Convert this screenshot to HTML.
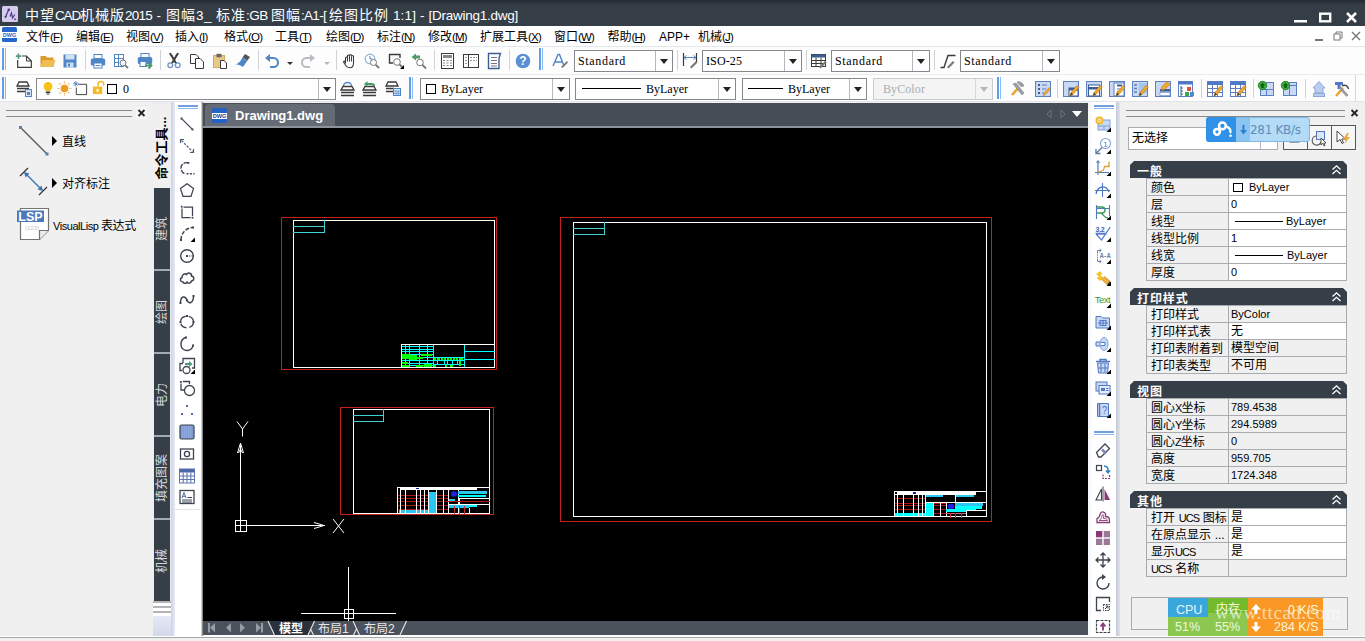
<!DOCTYPE html>
<html lang="zh-CN">
<head>
<meta charset="utf-8">
<title>中望CAD机械版2015</title>
<style>
*{box-sizing:border-box;margin:0;padding:0}
html,body{width:1365px;height:641px;overflow:hidden;background:#f0f0f0}
body{position:relative;font-family:"Liberation Sans","Noto Sans CJK SC",sans-serif;font-size:12px;color:#000;line-height:1}
.a{position:absolute}
.t{position:absolute;white-space:nowrap}
svg{position:absolute;overflow:visible}
#title{left:0;top:0;width:1365px;height:26px;background:linear-gradient(#262b32 0,#2e343c 3px,#353d46 5px,#353d46 100%)}
#title .t{color:#fff}
#menu{left:0;top:26px;width:1365px;height:20px;background:#fff}
#menu .t{top:5px;font-size:12px}
#tb1{left:0;top:46px;width:1365px;height:28px;background:#fdfdfd;border-top:1px solid #e3e6ea}
#tb2{left:0;top:74px;width:1365px;height:27px;background:#fdfdfd;border-top:1px solid #e9ebee}
.grip{position:absolute;width:4px;border-left:2px solid #5f9fe8;border-right:1px solid #8dbaf0}
.sep{position:absolute;width:1px;background:#cfd3d8}
.combo{position:absolute;background:#fff;border:1px solid #85888d;height:21px}
.combo .t{font-family:"Liberation Serif",serif;font-size:12px;top:4px}
.combo .t i{font-style:normal}
.combo .dd{position:absolute;right:0;top:0;width:17px;height:20px;border-left:1px solid #b5b9bf}
.combo .dd:after{content:"";position:absolute;left:4px;top:8px;border:4px solid transparent;border-top:5px solid #222;border-bottom:0}
.vtab{position:absolute;left:154px;width:16px;background:#363e48;color:#d5d9de}
.vtab span{position:absolute;left:50%;top:50%;white-space:nowrap;transform:translate(-50%,-50%) rotate(-90deg);font-size:12px}
.sec{position:absolute;left:1130px;width:217px;height:17px;background:#363e48;clip-path:polygon(4px 0,213px 0,217px 4px,217px 17px,0 17px,0 4px);color:#fff;font-weight:bold;font-size:12px}
.sec .t{left:7px;top:5px}
.row{position:absolute;left:1146px;width:201px;height:18px;border:1px solid #a8abb0;background:#f0f0f0}
.row .l{position:absolute;left:4px;top:2.5px;white-space:nowrap;font-size:12px}
.row .v{position:absolute;left:81px;top:0;width:118px;height:16px;border-left:1px solid #a8abb0;background:#f0f0f0;font-size:11px}
.row .v.w{background:#fff}
.row .v span{position:absolute;left:3px;top:3px;white-space:nowrap}
</style>
</head>
<body>
<style>
.combo.dis{background:#f4f4f4;border-color:#c9ccd1}
.combo.dis .dd{border-left-color:#d5d7db}
.combo.dis .dd:after{border-top-color:#b5b8bd}
.row .v i.sw{position:absolute;left:4px;top:4px;width:10px;height:9px;border:1px solid #000;background:#fff}
.row .v i.ln{position:absolute;left:6px;top:8px;width:48px;height:1px;background:#000}
.row .v span{font-size:11px;letter-spacing:0;left:2px}
.row .l b.en{font-weight:normal;font-size:11px;letter-spacing:-0.9px;word-spacing:1.5px}
.sec .t{letter-spacing:0.9px}
</style>
<div id="title" class="a">
<svg style="left:2px;top:6px" width="16" height="16" viewBox="0 0 16 16"><rect x="0" y="0" width="16" height="16" rx="1.500" fill="#d6cbef"/><path d="M6.800 3.500 L3.500 11" stroke="#4a3a80" stroke-width="1.300"/><circle cx="6.800" cy="3.800" r="1.300" fill="#4a3a80"/><path d="M2.300 10 L5 10 L3.500 12.500 Z" fill="#4a3a80"/><path d="M8 10.500 L9.500 7 L10.500 12 L12.800 8.500" fill="none" stroke="#4a3a80" stroke-width="1.200"/><rect x="12" y="12.500" width="2.200" height="1.600" fill="#6a5a98"/></svg>
<span class="t" id="ttxt" style="left:25px;top:6.500px;font-size:14px;letter-spacing:1px;line-height:17px;white-space:pre">中望<span style="font-size:13.500px;letter-spacing:-1.17px">CAD</span>机械版<span style="font-size:13.500px;letter-spacing:-0.76px">2015</span><span style="font-size:13.500px;letter-spacing:0.67px"> - </span>图幅<span style="font-size:13.500px;letter-spacing:0.4px">3_ </span>标准<span style="font-size:13.500px;letter-spacing:-0.5px">:GB </span>图幅<span style="font-size:13.500px;letter-spacing:-0.71px">:A1-[ </span>绘图比例<span style="font-size:13.500px;letter-spacing:0.15px"> 1:1] - </span><span style="font-size:13.500px;letter-spacing:-0.25px">[Drawing1.dwg]</span></span>
<svg style="left:1293px;top:10px" width="66" height="14" viewBox="0 0 66 14"><rect x="1" y="10" width="13" height="2.500" fill="#fff"/><rect x="27.200" y="3.700" width="10" height="7.600" fill="none" stroke="#fff" stroke-width="2.400"/><path d="M54 3 L63 12 M63 3 L54 12" stroke="#fff" stroke-width="2.500" fill="none"/></svg>
</div>
<div id="menu" class="a">
<svg style="left:2px;top:1px" width="16" height="16" viewBox="0 0 16 16"><rect x="0" y="0" width="15" height="15" rx="1.5" fill="#2566cc"/><rect x="0" y="5" width="15" height="6" fill="#fff"/><text x="7.5" y="10.3" font-size="5.5" font-weight="bold" text-anchor="middle" fill="#2a62b8" font-family="Liberation Sans,sans-serif">DWG</text></svg>
<span class="t" style="left:26px">文件<span style="letter-spacing:-0.8px;font-size:11.5px">(<u>F</u>)</span></span>
<span class="t" style="left:76px">编辑<span style="letter-spacing:-0.8px;font-size:11.5px">(<u>E</u>)</span></span>
<span class="t" style="left:126px">视图<span style="letter-spacing:-0.8px;font-size:11.5px">(<u>V</u>)</span></span>
<span class="t" style="left:175px">插入<span style="letter-spacing:-0.8px;font-size:11.5px">(<u>I</u>)</span></span>
<span class="t" style="left:224px">格式<span style="letter-spacing:-0.8px;font-size:11.5px">(<u>O</u>)</span></span>
<span class="t" style="left:275px">工具<span style="letter-spacing:-0.8px;font-size:11.5px">(<u>T</u>)</span></span>
<span class="t" style="left:326px">绘图<span style="letter-spacing:-0.8px;font-size:11.5px">(<u>D</u>)</span></span>
<span class="t" style="left:377px">标注<span style="letter-spacing:-0.8px;font-size:11.5px">(<u>N</u>)</span></span>
<span class="t" style="left:428px">修改<span style="letter-spacing:-0.8px;font-size:11.5px">(<u>M</u>)</span></span>
<span class="t" style="left:480px">扩展工具<span style="letter-spacing:-0.8px;font-size:11.5px">(<u>X</u>)</span></span>
<span class="t" style="left:554px">窗口<span style="letter-spacing:-0.8px;font-size:11.5px">(<u>W</u>)</span></span>
<span class="t" style="left:607.5px">帮助<span style="letter-spacing:-0.8px;font-size:11.5px">(<u>H</u>)</span></span>
<span class="t" style="left:659px">APP+</span>
<span class="t" style="left:698px">机械<span style="letter-spacing:-0.8px;font-size:11.5px">(<u>J</u>)</span></span>
<svg style="left:1314.500px;top:5px" width="50" height="12" viewBox="0 0 50 12"><rect x="0" y="8" width="8" height="2" fill="#777"/><rect x="19" y="3" width="6" height="6" fill="none" stroke="#777"/><path d="M21 3 V1 H27 V7 H25" fill="none" stroke="#777"/><path d="M37 1 L45 9 M45 1 L37 9" stroke="#777" stroke-width="1.4" fill="none"/></svg>
</div>
<div id="tb1" class="a">
<div class="grip" style="left:2px;top:1px;height:22px"></div>
<div class="sep" style="left:85px;top:3px;height:20px"></div>
<div class="sep" style="left:160px;top:3px;height:20px"></div>
<div class="sep" style="left:258px;top:3px;height:20px"></div>
<svg style="left:16px;top:6px" width="16" height="16" viewBox="0 0 16 16"><path d="M6 3 H10.500 L15.300 8 V14.300 H1.700 V7" fill="#fff" stroke="#3a3a3a" stroke-width="1.200"/><path d="M10.500 3 V8 H15.300" fill="none" stroke="#3a3a3a" stroke-width="1"/><path d="M2.500 0.500 V6 M-0.200 3.200 H5.200" stroke="#5a9a7a" stroke-width="1.700"/></svg>
<svg style="left:40px;top:6px" width="16" height="16" viewBox="0 0 16 16"><path d="M0.5 3 H5.5 L7 4.5 H13.5 V14 H0.5 Z" fill="#d99a2b"/><path d="M0.5 14 L2.5 7 H15.5 L13.5 14 Z" fill="#f0bc55"/></svg>
<svg style="left:62px;top:6px" width="16" height="16" viewBox="0 0 16 16"><path d="M1.5 1.5 H14.5 V14.5 H1.5 Z" fill="#4f86c6"/><rect x="3.5" y="1.5" width="9" height="5" fill="#cfe0f5"/><rect x="4.5" y="9.5" width="7" height="5" fill="#cfe0f5"/><rect x="6" y="10.5" width="2" height="3" fill="#4f86c6"/></svg>
<svg style="left:90px;top:6px" width="16" height="16" viewBox="0 0 16 16"><rect x="4" y="1.5" width="8" height="4" fill="#fff" stroke="#4f86c6"/><rect x="0.8" y="5.5" width="14.4" height="7" rx="1.5" fill="#4f86c6"/><rect x="4" y="10" width="8" height="5" fill="#fff" stroke="#4f86c6"/><path d="M5.5 12.5 H10.5" stroke="#4f86c6"/></svg>
<svg style="left:113px;top:6px" width="16" height="16" viewBox="0 0 16 16"><rect x="1.5" y="1.5" width="9" height="12" fill="#fff" stroke="#4f86c6"/><path d="M1.5 5.5 H10.5 M5.5 1.5 V13.5 M1.5 9.5 H5.5" stroke="#4f86c6"/><circle cx="10" cy="10" r="3" fill="#eef4fb" stroke="#777"/><path d="M12.3 12.3 L15 15" stroke="#777" stroke-width="1.8"/></svg>
<svg style="left:137px;top:6px" width="16" height="16" viewBox="0 0 16 16"><rect x="4" y="0.5" width="8" height="4" fill="#fff" stroke="#4f86c6"/><rect x="0.8" y="4" width="14.4" height="7" rx="1.5" fill="#4f86c6"/><rect x="3" y="8.5" width="6" height="5" fill="#fff" stroke="#4f86c6"/><path d="M8 12.5 H14 M11.5 9.5 L14.5 12.5 L11.5 15.5" stroke="#4a9b6a" stroke-width="1.8" fill="none"/></svg>
<svg style="left:166px;top:6px" width="16" height="16" viewBox="0 0 16 16"><path d="M3.500 0.500 L5 0.500 L10.500 10 L9.500 10.500 Z M12.500 0.500 L11 0.500 L5.500 10 L6.500 10.500 Z" fill="#3a3a3a" stroke="#3a3a3a" stroke-width="0.900"/><circle cx="4.3" cy="12.3" r="2.4" fill="none" stroke="#6d93c8" stroke-width="1.3"/><circle cx="11.7" cy="12.3" r="2.4" fill="none" stroke="#6d93c8" stroke-width="1.3"/></svg>
<svg style="left:189px;top:6px" width="16" height="16" viewBox="0 0 16 16"><path d="M1.5 1.5 H7 L9.5 4 V10.5 H1.5 Z" fill="#fff" stroke="#3a3a3a"/><path d="M6.5 5.5 H11 L14.5 9 V15.5 H6.5 Z" fill="#fff" stroke="#3a3a3a"/></svg>
<svg style="left:212px;top:6px" width="16" height="16" viewBox="0 0 16 16"><rect x="1.5" y="2.5" width="11" height="12" fill="#e8c98a" stroke="#d0a860"/><rect x="4.5" y="0.8" width="5" height="3.5" fill="#666"/><path d="M8.5 7.5 H12 L14.5 10 V15.5 H8.5 Z" fill="#fff" stroke="#3a3a3a"/></svg>
<svg style="left:235px;top:6px" width="16" height="16" viewBox="0 0 16 16"><path d="M10 1 L15 4 L12.5 7.5 L7.5 4.5 Z" fill="#555"/><path d="M7.5 4.5 L12.5 7.5 L8 14 C5 12 3 11.5 0.5 11.5 C4 10 6 8 7.5 4.5 Z" fill="#4f86c6"/></svg>
<svg style="left:264px;top:6px" width="16" height="16" viewBox="0 0 16 16"><path d="M1 5 L6 1 V9 Z" fill="#4f86c6"/><path d="M5 5 H9.5 A4.5 4.5 0 0 1 9.5 14 H6" fill="none" stroke="#4f86c6" stroke-width="2"/></svg>
<div class="a" style="left:287px;top:15px;border:3px solid transparent;border-top:3px solid #333;border-bottom:0"></div>
<svg style="left:300px;top:6px" width="16" height="16" viewBox="0 0 16 16"><path d="M15 5 L10 1 V9 Z" fill="#b9bdc2"/><path d="M11 5 H6.5 A4.5 4.5 0 0 0 6.5 14 H10" fill="none" stroke="#b9bdc2" stroke-width="2"/></svg>
<div class="a" style="left:324px;top:15px;border:3px solid transparent;border-top:3px solid #b5b9be;border-bottom:0"></div>
<div class="sep" style="left:336px;top:3px;height:20px"></div>
<svg style="left:342px;top:6px" width="16" height="16" viewBox="0 0 16 16"><path d="M3.500 9.500 V5 Q3.500 4 4.500 4 Q5.500 4 5.500 5 V3 Q5.500 2 6.500 2 Q7.500 2 7.500 3 V2.500 Q7.500 1.500 8.500 1.500 Q9.500 1.500 9.500 2.500 V3.500 Q9.500 2.500 10.500 2.500 Q11.500 2.500 11.500 3.500 V10 Q11.500 14.700 8 14.700 Q5 14.700 3.800 12.500 L1.700 9.200 Q1.300 7.800 2.600 8.200 Z" fill="#fff" stroke="#3a3a3a" stroke-width="1.100"/><path d="M5.500 5 V8.500 M7.500 3 V8.500 M9.500 3.500 V8.500" fill="none" stroke="#3a3a3a" stroke-width="1"/></svg>
<svg style="left:364px;top:6px" width="16" height="16" viewBox="0 0 16 16"><circle cx="6" cy="6" r="4.8" fill="#fff" stroke="#8db4e2" stroke-width="1.2"/><path d="M6 3 V6 H8.5" stroke="#4f86c6" fill="none"/><circle cx="9.5" cy="9.5" r="3" fill="#fff" stroke="#777"/><path d="M11.8 11.8 L15 15" stroke="#777" stroke-width="1.8"/></svg>
<svg style="left:388px;top:6px" width="16" height="16" viewBox="0 0 16 16"><path d="M12 5 V1.5 H1.5 V10 H5" fill="none" stroke="#3a3a3a" stroke-width="1.4"/><circle cx="9" cy="9" r="3.3" fill="#fff" stroke="#777"/><path d="M11.5 11.5 L14 14" stroke="#777" stroke-width="1.8"/><path d="M16 12 V16 H12 Z" fill="#000"/></svg>
<svg style="left:411px;top:6px" width="16" height="16" viewBox="0 0 16 16"><path d="M0.5 4 L5 0.5 V2.5 H9 V5.5 H5 V7.5 Z" fill="#4a9b6a"/><circle cx="9" cy="9.5" r="3.3" fill="#fff" stroke="#777"/><path d="M11.5 12 L15 15.5" stroke="#777" stroke-width="1.8"/></svg>
<div class="sep" style="left:434px;top:3px;height:20px"></div>
<svg style="left:440px;top:6px" width="16" height="16" viewBox="0 0 16 16"><rect x="1.5" y="0.5" width="12" height="15" fill="#fff" stroke="#3a3a3a"/><rect x="3" y="2" width="9" height="3" fill="#888"/><path d="M3 7.5 H12 M3 10 H12 M3 12.5 H12" stroke="#888" stroke-dasharray="2 1.5"/></svg>
<svg style="left:463px;top:6px" width="16" height="16" viewBox="0 0 16 16"><rect x="0.5" y="1.5" width="15" height="13" fill="#fff" stroke="#3a3a3a"/><path d="M5.5 1.5 V14.5" stroke="#3a3a3a"/><path d="M2 4.5 H4 M2 7.5 H4 M2 10.5 H4 M7 4.5 H14 M7 7.5 H14" stroke="#999" stroke-dasharray="2 1"/></svg>
<svg style="left:486px;top:6px" width="16" height="16" viewBox="0 0 16 16"><path d="M2.5 0.5 H14.5 L13 5 V15.5 H2.5 Z" fill="#fff" stroke="#3c5f94" stroke-width="1.4"/><path d="M5 4.5 H11 M5 7.5 H11 M5 10.5 H11 M5 13 H11" stroke="#777"/></svg>
<div class="sep" style="left:509px;top:3px;height:20px"></div>
<svg style="left:515px;top:6px" width="16" height="16" viewBox="0 0 16 16"><circle cx="8" cy="8" r="7.3" fill="#5b8fd4"/><text x="8" y="12.3" font-size="12" font-weight="bold" text-anchor="middle" fill="#fff" font-family="Liberation Sans,sans-serif">?</text></svg>
<div class="grip" style="left:539px;top:1px;height:22px"></div>
<svg style="left:552px;top:6px" width="16" height="16" viewBox="0 0 16 16"><path d="M1 13 L6 1.5 H7.5 L12 13 M3 9 H10.5" fill="none" stroke="#4f86c6" stroke-width="1.4"/><path d="M9 14 L15 8 L16 9.5 L10.5 15 Z" fill="#777"/></svg>
<div class="combo" style="left:574px;top:3px;width:99px;height:22px"><span class="t" style="left:3px"><i style="letter-spacing:0.67px">Standard</i></span><div class="dd"></div></div>
<div class="sep" style="left:677px;top:3px;height:20px"></div>
<svg style="left:682px;top:6px" width="16" height="16" viewBox="0 0 16 16"><path d="M1.5 0 V13 M14.5 0 V9" stroke="#3a3a3a" stroke-width="1.2"/><path d="M2 4.5 H14 M4.5 2.5 L2 4.5 L4.5 6.5 M11.5 2.5 L14 4.5 L11.5 6.5" stroke="#4f86c6" fill="none"/><path d="M8 14 L14 8 L15.5 9.5 L9.5 15.5 Z" fill="#777"/></svg>
<div class="combo" style="left:702px;top:3px;width:100px;height:22px"><span class="t" style="left:3px"><i style="letter-spacing:0.11px">ISO-25</i></span><div class="dd"></div></div>
<div class="sep" style="left:806px;top:3px;height:20px"></div>
<svg style="left:811px;top:6px" width="16" height="16" viewBox="0 0 16 16"><rect x="0.5" y="1.5" width="14" height="12" fill="#fff" stroke="#3a3a3a"/><rect x="0.5" y="1.5" width="14" height="3" fill="#3c5f94"/><path d="M0.5 7.5 H14.5 M0.5 10.5 H14.5 M5 4.5 V13.5 M10 4.5 V13.5" stroke="#3a3a3a"/><path d="M8 14 L14 8 L15.5 9.5 L9.5 15.5 Z" fill="#777"/></svg>
<div class="combo" style="left:831px;top:3px;width:99px;height:22px"><span class="t" style="left:3px"><i style="letter-spacing:0.67px">Standard</i></span><div class="dd"></div></div>
<div class="sep" style="left:934px;top:3px;height:20px"></div>
<svg style="left:940px;top:6px" width="16" height="16" viewBox="0 0 16 16"><path d="M0.5 14.5 H4 L8 2.5 H15.5" fill="none" stroke="#3a3a3a" stroke-width="1.4"/><path d="M7 14 L13 8 L14.5 9.5 L8.5 15.5 Z" fill="#777"/></svg>
<div class="combo" style="left:960px;top:3px;width:100px;height:22px"><span class="t" style="left:3px"><i style="letter-spacing:0.67px">Standard</i></span><div class="dd"></div></div>
</div>
<div id="tb2" class="a">
<div class="grip" style="left:2px;top:2px;height:22px"></div>
<svg style="left:16px;top:6px" width="16" height="16" viewBox="0 0 16 16"><path d="M3 1 H11 L13 5 H1 Z M1 7.5 H13 M1 10.5 H9" fill="#fff" stroke="#3a3a3a" stroke-width="1.3"/><rect x="9.5" y="8.5" width="6" height="7" fill="#dbe7f6" stroke="#4f86c6"/><rect x="11" y="11" width="3" height="3" fill="#4f86c6"/></svg>
<div class="combo" style="left:36px;top:3px;width:300px;height:22px"><svg style="left:4px;top:2px" width="14" height="15" viewBox="0 0 16 16"><path d="M8 0.5 a5 5 0 0 1 3 9 v1.5 h-6 v-1.5 a5 5 0 0 1 3 -9 Z" fill="#f5c21b"/><rect x="5.5" y="11.5" width="5" height="2" fill="#333"/><path d="M6.5 14 H9.5 L8 15.5 Z" fill="#333"/></svg><svg style="left:20px;top:2px" width="15" height="15" viewBox="0 0 16 16"><circle cx="8" cy="8" r="4" fill="#f29a1f"/><path d="M8 0.5 V3 M8 13 V15.5 M0.5 8 H3 M13 8 H15.5 M2.7 2.7 L4.4 4.4 M11.6 11.6 L13.3 13.3 M13.3 2.7 L11.6 4.4 M2.7 13.3 L4.4 11.6" stroke="#f29a1f" stroke-width="1.3" stroke-dasharray="1.2 0.8"/></svg><svg style="left:36px;top:2px" width="15" height="15" viewBox="0 0 16 16"><path d="M5.5 3.5 H14.5 V14.5 H3.5 V7" fill="#fff" stroke="#3a3a3a"/><path d="M3 0 V6 M0 3 H6 M1 1 L5 5 M5 1 L1 5" stroke="#4f86c6" stroke-width="0.9"/></svg><svg style="left:54px;top:1px" width="15" height="15" viewBox="0 0 16 16"><rect x="2" y="7" width="10" height="8" fill="#f2b92b"/><path d="M7.5 7 V4.5 a3 3 0 0 1 6 0 V6" fill="none" stroke="#f2b92b" stroke-width="1.6"/><rect x="6" y="9.5" width="2" height="3" fill="#fff"/></svg><div class="a" style="left:70px;top:5px;width:10px;height:10px;border:1px solid #000;background:#fff"></div><span class="t" style="left:86px"><i style="letter-spacing:0px">0</i></span><div class="dd"></div></div>
<svg style="left:340px;top:6px" width="16" height="16" viewBox="0 0 16 16"><path d="M3.5 5 a4 3.5 0 0 1 8 0" fill="#fff" stroke="#4f86c6" stroke-width="1.3"/><path d="M3 5.5 H12 L14 9 H1 Z M1 11.5 H14 M1 14.5 H14" fill="#fff" stroke="#3a3a3a" stroke-width="1.3"/></svg>
<svg style="left:362px;top:6px" width="16" height="16" viewBox="0 0 16 16"><path d="M3 5.5 H12 L14 9 H1 Z M1 11.5 H14 M1 14.5 H14" fill="#fff" stroke="#3a3a3a" stroke-width="1.3"/><path d="M2 3 L5.5 0 V2 H10 a3 3 0 0 1 3 3 H11 a1.5 1.5 0 0 0 -1.5 -1 H5.5 V6 Z" fill="#4a9b6a"/></svg>
<svg style="left:385px;top:6px" width="16" height="16" viewBox="0 0 16 16"><path d="M3 1 H11 L13 5 H1 Z M1 7.5 H9 M1 10.5 H8" fill="#fff" stroke="#3a3a3a" stroke-width="1.3"/><rect x="8.5" y="7.5" width="7" height="7" fill="#dbe7f6" stroke="#4f86c6"/><path d="M8.5 10 H15.5 M11 10 V14.5 M13.3 10 V14.5 M8.5 12.3 H15.5" stroke="#4f86c6" stroke-width="0.7"/></svg>
<div class="grip" style="left:409px;top:2px;height:22px"></div>
<div class="combo" style="left:420px;top:3px;width:150px;height:22px"><div class="a" style="left:5px;top:5px;width:10px;height:10px;border:1px solid #000;background:#fff"></div><span class="t" style="left:20px"><i style="letter-spacing:0px">ByLayer</i></span><div class="dd"></div></div>
<div class="combo" style="left:575px;top:3px;width:161px;height:22px"><div class="a" style="left:6px;top:9px;width:59px;height:1px;background:#000"></div><span class="t" style="left:70px"><i style="letter-spacing:0px">ByLayer</i></span><div class="dd"></div></div>
<div class="combo" style="left:742px;top:3px;width:125px;height:22px"><div class="a" style="left:5px;top:9px;width:35px;height:1px;background:#000"></div><span class="t" style="left:45px"><i style="letter-spacing:0px">ByLayer</i></span><div class="dd"></div></div>
<div class="combo dis" style="left:873px;top:3px;width:120px;height:22px"><span class="t" style="left:9px;color:#a9adb2"><i style="letter-spacing:0.09px">ByColor</i></span><div class="dd"></div></div>
<div class="grip" style="left:997px;top:2px;height:22px"></div>
<svg style="left:1010px;top:6px" width="16" height="16" viewBox="0 0 16 16"><path d="M2 14 L9 6" stroke="#e9a52c" stroke-width="2.6"/><path d="M7 1 C10 0 13 2 14 5 L11 5.5 L9 3.5 Z M3 3 L6 2 L14 12 L12 14 Z" fill="#9aa0a8" stroke="#777" stroke-width="0.5"/></svg>
<svg style="left:1035px;top:6px" width="16" height="16" viewBox="0 0 16 16"><rect x="0.5" y="0.5" width="15" height="15" fill="#c9d8f3" stroke="#5f7fc4"/><path d="M3 4 h2 M3 8 h2 M3 12 h2" stroke="#3c5f94" stroke-width="2"/><path d="M7 4 h5 M7 8 h4 M7 12 h2" stroke="#5f7fc4"/><path d="M8 15 L9 12 L14 6.5 L15.5 8 L10.5 13.5 Z" fill="#f0a830" stroke="#b87a1a" stroke-width="0.5"/></svg>
<svg style="left:1063px;top:6px" width="16" height="16" viewBox="0 0 16 16"><rect x="0.5" y="0.5" width="15" height="15" fill="#c9d8f3" stroke="#5f7fc4"/><rect x="6" y="7" width="9" height="8" fill="#fff" stroke="#3c5f94"/><rect x="6" y="7" width="9" height="2.5" fill="#3c5f94"/><path d="M7 15 L8 11.5 L14 4.5 L16 6.5 L10 13.5 Z" fill="#f0a830" stroke="#b87a1a" stroke-width="0.6"/><path d="M7 15 L8 11.5 L10 13.5 Z" fill="#444"/></svg>
<svg style="left:1086px;top:6px" width="16" height="16" viewBox="0 0 16 16"><rect x="0.5" y="0.5" width="15" height="15" fill="#c9d8f3" stroke="#5f7fc4"/><rect x="2.5" y="4" width="11" height="11" fill="#fff" stroke="#3c5f94"/><rect x="2.5" y="6" width="11" height="2.5" fill="#3c5f94"/><path d="M7 15 L8 11.5 L14 4.5 L16 6.5 L10 13.5 Z" fill="#f0a830" stroke="#b87a1a" stroke-width="0.6"/><path d="M7 15 L8 11.5 L10 13.5 Z" fill="#444"/></svg>
<svg style="left:1109px;top:6px" width="16" height="16" viewBox="0 0 16 16"><rect x="0.5" y="0.5" width="15" height="15" fill="#c9d8f3" stroke="#5f7fc4"/><rect x="5" y="2" width="10" height="13" fill="#fff" stroke="#5f7fc4"/><rect x="8" y="3.5" width="5" height="2" fill="#3c5f94"/><path d="M8 8 h5 M8 10.5 h3" stroke="#5f7fc4"/><path d="M7 15 L8 11.5 L14 4.5 L16 6.5 L10 13.5 Z" fill="#f0a830" stroke="#b87a1a" stroke-width="0.6"/><path d="M7 15 L8 11.5 L10 13.5 Z" fill="#444"/></svg>
<svg style="left:1132px;top:6px" width="16" height="16" viewBox="0 0 16 16"><rect x="0.5" y="0.5" width="15" height="15" fill="#c9d8f3" stroke="#5f7fc4"/><path d="M2 4 h3 M2 7.5 h3 M2 11 h3" stroke="#5f7fc4" stroke-width="1.3"/><path d="M7 2 H15 V12 H7 Z" fill="#a9c4ea"/><path d="M7 15 L8 11.5 L14 4.5 L16 6.5 L10 13.5 Z" fill="#f0a830" stroke="#b87a1a" stroke-width="0.6"/><path d="M7 15 L8 11.5 L10 13.5 Z" fill="#444"/></svg>
<svg style="left:1155px;top:6px" width="16" height="16" viewBox="0 0 16 16"><rect x="0.5" y="0.5" width="15" height="15" fill="#c9d8f3" stroke="#5f7fc4"/><rect x="5" y="8" width="10" height="2.5" fill="#3c5f94"/><rect x="5" y="11.5" width="10" height="3" fill="#fff" stroke="#5f7fc4" stroke-width="0.6"/><path d="M6 9 L7 5.5 L12 0.5 L15 3.5 L9.5 8.5 Z" fill="#f0a830" stroke="#b87a1a" stroke-width="0.6"/></svg>
<svg style="left:1178px;top:6px" width="16" height="16" viewBox="0 0 16 16"><rect x="0.5" y="0.5" width="14" height="15" fill="#fff" stroke="#5f7fc4"/><rect x="0.5" y="0.5" width="14" height="3" fill="#4f79c4"/><path d="M3 5 V15 M3 7 h2 M3 10 h2 M3 13 h2" stroke="#3c5f94"/><rect x="9" y="6" width="4" height="4" fill="#e0523e"/><rect x="7" y="11" width="4" height="4" fill="#3faa4b"/><rect x="12" y="11" width="4" height="4" fill="#4f86d8"/></svg>
<svg style="left:1207px;top:6px" width="16" height="16" viewBox="0 0 16 16"><rect x="0.5" y="0.5" width="15" height="15" fill="#fff" stroke="#5f7fc4"/><rect x="0.5" y="0.5" width="15" height="3.5" fill="#4f79c4"/><path d="M0.5 7.5 H15.5 M0.5 11.5 H15.5 M5.5 4 V15.5 M10.5 4 V15.5" stroke="#5f7fc4"/><path d="M7 15 L8 11.5 L14 4.5 L16 6.5 L10 13.5 Z" fill="#f0a830" stroke="#b87a1a" stroke-width="0.6"/><path d="M7 15 L8 11.5 L10 13.5 Z" fill="#444"/></svg>
<svg style="left:1230px;top:6px" width="16" height="16" viewBox="0 0 16 16"><rect x="0.5" y="0.5" width="15" height="15" fill="#fff" stroke="#5f7fc4"/><rect x="0.5" y="0.5" width="15" height="3.5" fill="#4f79c4"/><path d="M0.5 7.5 H15.5 M0.5 11.5 H15.5 M5.5 4 V15.5 M10.5 4 V15.5" stroke="#5f7fc4"/><path d="M7 15 L8 11.5 L14 4.5 L16 6.5 L10 13.5 Z" fill="#f0a830" stroke="#b87a1a" stroke-width="0.6"/><path d="M7 15 L8 11.5 L10 13.5 Z" fill="#444"/></svg>
<svg style="left:1258px;top:6px" width="16" height="16" viewBox="0 0 16 16"><rect x="2.5" y="1.5" width="13" height="13" fill="#c9d8f3" stroke="#5f7fc4"/><path d="M2.5 8.5 H15.5 M8.5 8.5 V14.5" stroke="#5f7fc4"/><circle cx="4.5" cy="4.5" r="4.2" fill="#3faa3f" stroke="#2a8a2a"/><path d="M4.5 1.8 L7 4.5 H5.7 V7 H3.3 V4.5 H2 Z" fill="#0b5d0b"/></svg>
<svg style="left:1281px;top:6px" width="16" height="16" viewBox="0 0 16 16"><rect x="2.5" y="1.5" width="13" height="13" fill="#c9d8f3" stroke="#5f7fc4"/><path d="M8.5 4.5 V14.5 M2.5 4.5 H15.5" stroke="#5f7fc4"/><circle cx="4.5" cy="4.5" r="4.2" fill="#3faa3f" stroke="#2a8a2a"/><path d="M4.5 1.8 L7 4.5 H5.7 V7 H3.3 V4.5 H2 Z" fill="#0b5d0b"/></svg>
<svg style="left:1311px;top:6px" width="16" height="16" viewBox="0 0 16 16"><path d="M8 0.5 L14 7 H12 V12 H4 V7 H2 Z" fill="#b9cdf0" stroke="#8fa8dc"/><rect x="2.5" y="12.5" width="11" height="3" fill="#b9cdf0" stroke="#8fa8dc"/></svg>
<svg style="left:1334px;top:6px" width="16" height="16" viewBox="0 0 16 16"><path d="M1 1 H9 V4 H6.5 V8 H3.5 V4 H1 Z" fill="#4f79c4"/><path d="M2 15 L9 7" stroke="#e9a52c" stroke-width="2.4"/><path d="M6 5 L14 14 L12.5 15.5 L5 7 Z" fill="#9aa0a8" stroke="#777" stroke-width="0.5"/><path d="M8 5 C11 3 14 5 14.5 8" fill="none" stroke="#444" stroke-width="1.4"/></svg>
<div class="sep" style="left:1057px;top:4px;height:19px"></div>
<div class="sep" style="left:1201px;top:4px;height:19px"></div>
<div class="sep" style="left:1253px;top:4px;height:19px"></div>
<div class="sep" style="left:1305px;top:4px;height:19px"></div>
<div class="a" style="left:1355px;top:0;width:1px;height:27px;background:#d5d8dc"></div>
</div>
<div class="a" style="left:0;top:101px;width:1365px;height:1px;background:#e2e4e8"></div>
<div class="a" style="left:0;top:102px;width:153px;height:534px;background:#f0f0f0"></div>
<div class="a" style="left:6px;top:110px;width:126px;height:1px;background:#8a8a8a"></div>
<div class="a" style="left:6px;top:116px;width:126px;height:1px;background:#8a8a8a"></div>
<div class="a" style="left:136px;top:107px;width:11px;height:12px;background:#f7f7f7"></div>
<svg style="left:138px;top:109px" width="8" height="8" viewBox="0 0 8 8"><path d="M0.5 1 L6.5 7 M6.5 1 L0.5 7" stroke="#222" stroke-width="1.8"/></svg>
<svg style="left:17px;top:124px" width="34" height="34" viewBox="0 0 34 34"><path d="M4 4 L30 30" stroke="#555" stroke-width="1.3"/><rect x="2" y="2" width="3" height="3" fill="#5b7fae"/><rect x="28.5" y="28.5" width="3" height="3" fill="#5b7fae"/></svg>
<div class="a" style="left:52px;top:136px;border:5px solid transparent;border-left:5px solid #000;border-right:0"></div>
<span class="t" style="left:62px;top:136px">直线</span>
<svg style="left:17px;top:165px" width="34" height="34" viewBox="0 0 34 34"><path d="M3 11 L11 3 M22 30 L30 22" stroke="#333" stroke-width="1.2"/><path d="M8 8 L25 25" stroke="#3f74b4" stroke-width="1.4"/><path d="M7 7 L12.5 8.5 L8.5 12.5 Z M26 26 L20.5 24.5 L24.5 20.5 Z" fill="#3f74b4"/></svg>
<div class="a" style="left:52px;top:178px;border:5px solid transparent;border-left:5px solid #000;border-right:0"></div>
<span class="t" style="left:62px;top:178px">对齐标注</span>
<svg style="left:17px;top:207px" width="33" height="34" viewBox="0 0 33 34"><path d="M3.500 1.500 H31.500 V23.500 L22.500 32.500 H3.500 Z" fill="#fff" stroke="#747474" stroke-width="1.200"/><path d="M22.500 32.500 V23.500 H31.500" fill="#ececec" stroke="#747474" stroke-width="1.200"/><rect x="0" y="3.500" width="27" height="11.500" fill="#4a78b8"/><text x="13.500" y="14.200" font-size="12.500" font-weight="bold" text-anchor="middle" fill="#fff" font-family="Liberation Sans,sans-serif">LSP</text><text x="15" y="23" font-size="6" text-anchor="middle" fill="#c9c9c9" font-family="Liberation Sans,sans-serif">(123)</text></svg>
<span class="t" style="left:53px;top:220px;font-size:11px;letter-spacing:-0.45px">VisualLisp <span style="font-size:12px">表达式</span></span>
<div class="a" style="left:153px;top:102px;width:19px;height:534px;background:#e9ecf3"></div>
<div class="a" style="left:171px;top:102px;width:4px;height:534px;background:linear-gradient(90deg,#cdd2e2,#e8ebf5)"></div>
<div class="a" style="left:153px;top:104px;width:18px;height:84px;background:#f0f0f0"></div>
<div class="vtab" style="top:108px;height:79px;left:153px;background:transparent;color:#000;font-weight:bold"><span style="font-size:13px">命令工具...</span></div>
<div class="a" style="left:154px;top:188px;width:16px;height:413px;background:#a4aab4"></div>
<div class="vtab" style="top:188px;height:81px"><span>建筑</span></div>
<div class="vtab" style="top:271px;height:81px"><span>绘图</span></div>
<div class="vtab" style="top:354px;height:81px"><span>电力</span></div>
<div class="vtab" style="top:437px;height:81px"><span>填充图案</span></div>
<div class="vtab" style="top:520px;height:81px"><span>机械</span></div>
<div class="a" style="left:153px;top:601px;width:18px;height:16px;background:#b4b4b4"></div>
<div class="a" style="left:153px;top:603px;width:18px;height:3px;background:#fff"></div>
<div class="a" style="left:153px;top:608px;width:18px;height:3px;background:#fff"></div>
<div class="a" style="left:153px;top:613px;width:18px;height:3px;background:#fff"></div>
<div class="a" style="left:153px;top:616px;width:18px;height:20px;background:linear-gradient(#e6e9f4,#d2d8ec)"></div>
<div class="a" style="left:175px;top:102px;width:27px;height:534px;background:#fff"></div>
<div class="a" style="left:175px;top:509px;width:25px;height:1px;background:#e1e4ea"></div>
<div class="a" style="left:178px;top:105px;width:20px;height:4px;border-top:2px solid #6fa0e2;border-bottom:1px solid #8db8ee"></div>
<svg style="left:179px;top:116px" width="16" height="16" viewBox="0 0 16 16"><path d="M2.500 2.500 L13.500 13.500" stroke="#4a5060" stroke-width="1.100"/><rect x="1.500" y="1.500" width="2" height="2" fill="#4a5060"/><rect x="12.500" y="12.500" width="2" height="2" fill="#4a5060"/></svg>
<svg style="left:179px;top:138px" width="16" height="16" viewBox="0 0 16 16"><path d="M2.500 2.500 L13.500 13.500" stroke="#4a5a78" stroke-width="1.200" stroke-dasharray="2.400 1.300"/><path d="M1.500 5 V1.500 H5 M11 14.500 H14.500 V11" fill="none" stroke="#4a5a78" stroke-width="1.100"/></svg>
<svg style="left:179px;top:160px" width="16" height="16" viewBox="0 0 16 16"><path d="M9.500 3 C5 1.500 1.800 4.500 2 8.500 C2.200 11.500 4 13.300 6 13.600" fill="none" stroke="#3d4450" stroke-width="1.400" stroke-dasharray="5 1.200"/><path d="M7.500 13.800 H15.500" stroke="#3d4450" stroke-width="1.500" stroke-dasharray="2 1.400"/><rect x="8.500" y="2" width="1.800" height="1.800" fill="#3d4450"/></svg>
<svg style="left:179px;top:182px" width="16" height="16" viewBox="0 0 16 16"><path d="M8 1.800 L14.500 6.600 L12 14.300 H4 L1.500 6.600 Z" fill="none" stroke="#3d4450" stroke-width="1.250"/></svg>
<svg style="left:179px;top:204px" width="16" height="16" viewBox="0 0 16 16"><path d="M4.500 3 H13.500 V12 M11.500 13.500 H3 V4.500" fill="none" stroke="#3d4450" stroke-width="1.250"/><rect x="1.800" y="1.800" width="1.800" height="1.800" fill="#3d4450"/><rect x="12.600" y="12.800" width="1.800" height="1.800" fill="#3d4450"/></svg>
<svg style="left:179px;top:226px" width="16" height="16" viewBox="0 0 16 16"><path d="M2 14 C2 7 7 2 13.5 1.5" fill="none" stroke="#3d4450" stroke-width="1.5" stroke-dasharray="4 1.6"/><rect x="1" y="13" width="2" height="2" fill="#3d4450"/><rect x="13" y="0.5" width="2" height="2" fill="#3d4450"/><path d="M16 11.5 V16 H11.5 Z" fill="#000"/></svg>
<svg style="left:179px;top:248px" width="16" height="16" viewBox="0 0 16 16"><circle cx="8" cy="8" r="6.3" fill="none" stroke="#3d4450" stroke-width="1.4"/><rect x="7" y="7" width="2" height="2" fill="#3d4450"/><path d="M10 8 H14" stroke="#3d4450" stroke-width="1.2" stroke-dasharray="1.5 1"/></svg>
<svg style="left:179px;top:270px" width="16" height="16" viewBox="0 0 16 16"><path d="M4 12 C1 12 0.5 8.5 3 7.5 C2.5 4.5 6 3 7.5 4.5 C9 2 13 3 12.5 6 C15.5 6.5 15.5 10.5 12.5 11 C12 13.5 9 13.8 8 12.2 C7 13.8 4.5 13.8 4 12 Z" fill="none" stroke="#3d4450" stroke-width="1.5"/></svg>
<svg style="left:179px;top:292px" width="16" height="16" viewBox="0 0 16 16"><path d="M1.5 10 C2 4 6 3.5 8 8 C10 12.5 14 11 14.5 5" fill="none" stroke="#3d4450" stroke-width="1.5"/><rect x="0.5" y="10" width="2" height="2" fill="#3d4450"/><rect x="7" y="7.5" width="2" height="2" fill="#3d4450"/><rect x="13.5" y="3" width="2" height="2" fill="#3d4450"/></svg>
<svg style="left:179px;top:314px" width="16" height="16" viewBox="0 0 16 16"><ellipse cx="8" cy="8" rx="6.5" ry="5.8" fill="none" stroke="#3d4450" stroke-width="1.4" stroke-dasharray="7 3"/><rect x="0.5" y="7" width="2" height="2" fill="#3d4450"/><rect x="13.5" y="7" width="2" height="2" fill="#3d4450"/><rect x="7" y="1" width="2" height="2" fill="#3d4450"/></svg>
<svg style="left:179px;top:336px" width="16" height="16" viewBox="0 0 16 16"><path d="M6.5 1.5 C0.5 4 0.5 12.5 6.5 14.3 C10 15 13 13 14 10" fill="none" stroke="#3d4450" stroke-width="1.4"/><rect x="6" y="0.5" width="2" height="2" fill="#3d4450"/><rect x="13" y="8.5" width="2" height="2" fill="#3d4450"/></svg>
<svg style="left:179px;top:358px" width="16" height="16" viewBox="0 0 16 16"><path d="M4 5.5 H1 V12.5 H3 M4 5 V0.5 H15.5 V10 H13" fill="none" stroke="#3d4450" stroke-width="1.3"/><circle cx="7.5" cy="12" r="3.5" fill="#fff" stroke="#3d4450" stroke-width="1.3"/><path d="M6 5 H10 V3 L13.5 6 L10 9 V7 H6 Z" fill="#4a9b7a"/><path d="M16 11.5 V16 H11.5 Z" fill="#000"/></svg>
<svg style="left:179px;top:380px" width="16" height="16" viewBox="0 0 16 16"><path d="M2 3.5 V10 H5 M4 1.5 H10.5 V4" fill="none" stroke="#3d4450" stroke-width="1.3"/><rect x="1" y="1" width="1.8" height="1.8" fill="#3d4450"/><circle cx="10.5" cy="10.5" r="5" fill="#fff" stroke="#3d4450" stroke-width="1.3"/></svg>
<svg style="left:179px;top:402px" width="16" height="16" viewBox="0 0 16 16"><rect x="7" y="3" width="2" height="2" fill="#4f6f9c"/><rect x="2" y="11" width="2" height="2" fill="#4f6f9c"/><rect x="12" y="11" width="2" height="2" fill="#4f6f9c"/></svg>
<svg style="left:179px;top:424px" width="16" height="16" viewBox="0 0 16 16"><rect x="1" y="1" width="14" height="14" rx="1.5" fill="#7d9cd8" stroke="#3d4450" stroke-width="1.2"/><path d="M3 3 h10 M3 5 h10 M3 7 h10 M3 9 h10 M3 11 h10 M3 13 h10" stroke="#a9c0ea" stroke-width="0.8" stroke-dasharray="1 1"/></svg>
<svg style="left:179px;top:446px" width="16" height="16" viewBox="0 0 16 16"><rect x="1.5" y="3" width="13" height="10" fill="#fff" stroke="#3d4450" stroke-width="1.3"/><circle cx="8" cy="8" r="2.6" fill="none" stroke="#3d4450" stroke-width="1.3"/></svg>
<svg style="left:179px;top:468px" width="16" height="16" viewBox="0 0 16 16"><rect x="0.5" y="1" width="15" height="14" fill="#fff" stroke="#5f78b0"/><rect x="0.5" y="1" width="15" height="3.5" fill="#4f69a8"/><path d="M0.5 8 H15.5 M0.5 11.5 H15.5 M4.2 4.5 V15 M8 4.5 V15 M11.8 4.5 V15" stroke="#5f78b0" stroke-width="1.1"/></svg>
<svg style="left:179px;top:489px" width="16" height="16" viewBox="0 0 16 16"><rect x="1" y="1.5" width="14" height="13" fill="#fff" stroke="#3d4450" stroke-width="1.3"/><path d="M3 9 L5 3.5 L7 9 M3.7 7.3 H6.3" fill="none" stroke="#4f6f9c" stroke-width="1"/><path d="M8.5 8.5 H13 M3 11 H13 M3 13 H13" stroke="#3d4450" stroke-width="1"/></svg>
<div class="a" style="left:201px;top:102px;width:2px;height:534px;background:linear-gradient(90deg,#f0f0f0,#666)"></div>
<div class="a" style="left:203px;top:103px;width:885px;height:25px;background:#464d56"></div>
<div class="a" style="left:205px;top:104px;width:130px;height:23px;background:#646b75;border-radius:4px 4px 0 0"></div>
<div class="a" style="left:203px;top:126px;width:885px;height:2px;background:#8d9299"></div>
<svg style="left:212px;top:108px" width="15" height="15" viewBox="0 0 15 15"><rect x="0" y="0" width="15" height="15" rx="2" fill="#2363c7"/><rect x="0" y="5" width="15" height="6" fill="#fff"/><text x="7.500" y="10.200" font-size="5.600" font-weight="bold" text-anchor="middle" fill="#1d3f8f" font-family="Liberation Sans,sans-serif">DWG</text></svg>
<span class="t" id="tabtxt" style="left:235px;top:109px;color:#fff;font-weight:bold;font-size:13px;letter-spacing:0">Drawing1.dwg</span>
<svg style="left:1045px;top:109px" width="40" height="10" viewBox="0 0 40 10"><path d="M6 1 L2 5 L6 9 Z M16 1 L20 5 L16 9 Z" fill="none" stroke="#6b727c"/><path d="M27 2 H37 L32 8 Z" fill="#fff"/></svg>
<div class="a" style="left:203px;top:128px;width:885px;height:493px;background:#000"></div>
<svg style="left:203px;top:127px" width="885" height="494" viewBox="203 127 885 494" shape-rendering="crispEdges"><rect x="281.5" y="217.5" width="215" height="152" fill="none" stroke="#c4211d"/><rect x="293.5" y="220.5" width="201" height="147" fill="none" stroke="#ffffff"/><rect x="293" y="226" width="32" height="1" fill="#3fd2d2"/><rect x="293" y="232" width="32" height="1" fill="#3fd2d2"/><rect x="324" y="220" width="1" height="13" fill="#3fd2d2"/><rect x="401" y="346" width="33" height="1" fill="#00ffff"/><rect x="401" y="349" width="33" height="1" fill="#00ffff"/><rect x="401" y="351" width="33" height="1" fill="#00ffff"/><rect x="401" y="354" width="33" height="1" fill="#00ffff"/><rect x="401" y="357" width="33" height="1" fill="#00ffff"/><rect x="401" y="360" width="33" height="1" fill="#00ffff"/><rect x="401" y="363" width="33" height="1" fill="#00ffff"/><rect x="401" y="365" width="33" height="1" fill="#00ffff"/><rect x="405" y="344" width="1" height="23" fill="#00ffff"/><rect x="409" y="344" width="1" height="23" fill="#00ffff"/><rect x="419" y="344" width="1" height="23" fill="#00ffff"/><rect x="427" y="344" width="1" height="23" fill="#00ffff"/><rect x="402" y="354" width="7" height="5" fill="#00ff00"/><rect x="409" y="355" width="8" height="5" fill="#00ff00"/><rect x="417" y="357" width="6" height="2" fill="#00ff00"/><rect x="402" y="362" width="6" height="2" fill="#00ff00"/><rect x="402" y="365" width="7" height="2" fill="#00ff00"/><rect x="424" y="364" width="8" height="3" fill="#00ff00"/><rect x="416" y="365" width="7" height="2" fill="#00ff00"/><rect x="421" y="354" width="11" height="2" fill="#00ff00"/><rect x="433" y="344" width="1" height="23" fill="#00ffff"/><rect x="464" y="344" width="1" height="23" fill="#00ffff"/><rect x="433" y="357" width="32" height="1" fill="#00ffff"/><rect x="433" y="360" width="32" height="1" fill="#00ffff"/><rect x="433" y="364" width="32" height="1" fill="#00ffff"/><rect x="437" y="360" width="1" height="5" fill="#00ffff"/><rect x="444" y="360" width="1" height="5" fill="#00ffff"/><rect x="447" y="360" width="1" height="5" fill="#00ffff"/><rect x="452" y="360" width="1" height="5" fill="#00ffff"/><rect x="457" y="360" width="1" height="5" fill="#00ffff"/><rect x="460" y="360" width="1" height="5" fill="#00ffff"/><rect x="434" y="358" width="29" height="2" fill="#00ff00"/><rect x="459" y="361" width="2" height="5" fill="#00ff00"/><rect x="434" y="365" width="2" height="2" fill="#00ff00"/><rect x="445" y="365" width="2" height="2" fill="#00ff00"/><rect x="450" y="365" width="3" height="2" fill="#00ff00"/><rect x="436" y="358" width="1" height="2" fill="#000"/><rect x="440" y="358" width="1" height="2" fill="#000"/><rect x="443" y="358" width="1" height="2" fill="#000"/><rect x="446" y="358" width="1" height="2" fill="#000"/><rect x="449" y="358" width="1" height="2" fill="#000"/><rect x="452" y="358" width="1" height="2" fill="#000"/><rect x="455" y="358" width="1" height="2" fill="#000"/><rect x="458" y="358" width="1" height="2" fill="#000"/><rect x="464" y="351" width="31" height="1" fill="#00ffff"/><rect x="464" y="359" width="31" height="1" fill="#00ffff"/><rect x="401" y="344" width="94" height="1" fill="#ffffff"/><rect x="401" y="344" width="1" height="24" fill="#ffffff"/><rect x="340.5" y="407.5" width="153" height="107" fill="none" stroke="#c4211d"/><rect x="353.5" y="409.5" width="136" height="104" fill="none" stroke="#ffffff"/><rect x="353" y="415" width="31" height="1" fill="#3fd2d2"/><rect x="353" y="421" width="31" height="1" fill="#3fd2d2"/><rect x="383" y="409" width="1" height="13" fill="#3fd2d2"/><rect x="397" y="487" width="80" height="3" fill="#ffffff"/><rect x="477" y="487" width="13" height="1" fill="#ffffff"/><rect x="398" y="488" width="2" height="2" fill="#000"/><rect x="416" y="488" width="3" height="1" fill="#1a1ab0"/><rect x="397" y="495" width="52" height="1" fill="#b01515"/><rect x="397" y="498" width="52" height="1" fill="#b01515"/><rect x="397" y="501" width="52" height="1" fill="#b01515"/><rect x="397" y="505" width="52" height="1" fill="#b01515"/><rect x="397" y="509" width="52" height="1" fill="#b01515"/><rect x="429" y="492" width="7" height="21" fill="#28c8f0"/><rect x="399" y="510" width="30" height="3" fill="#28c8f0"/><rect x="397" y="490" width="1" height="24" fill="#ffffff"/><rect x="400" y="490" width="1" height="24" fill="#ffffff"/><rect x="405" y="490" width="1" height="24" fill="#ffffff"/><rect x="416" y="490" width="1" height="24" fill="#ffffff"/><rect x="420" y="490" width="1" height="24" fill="#ffffff"/><rect x="424" y="490" width="1" height="24" fill="#ffffff"/><rect x="428" y="490" width="1" height="24" fill="#ffffff"/><rect x="436" y="490" width="1" height="24" fill="#ffffff"/><rect x="443" y="490" width="1" height="24" fill="#ffffff"/><rect x="448" y="490" width="1" height="24" fill="#ffffff"/><rect x="458" y="490" width="1" height="24" fill="#ffffff"/><rect x="448" y="501" width="11" height="1" fill="#b01515"/><ellipse cx="454" cy="494" rx="3" ry="2.800" fill="#2020e8" shape-rendering="auto"/><rect x="458" y="491" width="29" height="3" fill="#28c8f0"/><rect x="458" y="495" width="28" height="2" fill="#00ffff"/><rect x="459" y="498" width="31" height="1" fill="#ffffff"/><rect x="459" y="498" width="1" height="7" fill="#ffffff"/><rect x="459" y="501" width="31" height="1" fill="#b01515"/><rect x="448" y="504" width="42" height="1" fill="#ffffff"/><rect x="449" y="499" width="6" height="2" fill="#28c8f0"/><rect x="449" y="505" width="20" height="3" fill="#28c8f0"/><rect x="469" y="505" width="8" height="2" fill="#00ffff"/><rect x="469" y="508" width="1" height="6" fill="#ffffff"/><rect x="454" y="506" width="1" height="9" fill="#c03030"/><rect x="459" y="506" width="1" height="9" fill="#c03030"/><rect x="464" y="506" width="1" height="9" fill="#c03030"/><rect x="397" y="487" width="1" height="27" fill="#ffffff"/><rect x="560.5" y="217.5" width="431" height="304" fill="none" stroke="#c4211d"/><rect x="573.5" y="222.5" width="413" height="294" fill="none" stroke="#ffffff"/><rect x="573" y="228" width="32" height="1" fill="#3fd2d2"/><rect x="573" y="234" width="32" height="1" fill="#3fd2d2"/><rect x="604" y="222" width="1" height="13" fill="#3fd2d2"/><rect x="894" y="491" width="82" height="4" fill="#ffffff"/><rect x="976" y="491" width="11" height="1" fill="#ffffff"/><rect x="895" y="492" width="2" height="2" fill="#000"/><rect x="913" y="492" width="3" height="2" fill="#1a1ab0"/><rect x="894" y="498" width="52" height="1" fill="#b01515"/><rect x="894" y="503" width="52" height="1" fill="#b01515"/><rect x="894" y="505" width="52" height="1" fill="#b01515"/><rect x="894" y="509" width="52" height="1" fill="#b01515"/><rect x="894" y="513" width="52" height="1" fill="#b01515"/><rect x="894" y="513" width="31" height="3" fill="#00ffff"/><rect x="926" y="495" width="20" height="7" fill="#000"/><rect x="926" y="503" width="7" height="13" fill="#00ffff"/><rect x="894" y="495" width="1" height="22" fill="#ffffff"/><rect x="897" y="495" width="1" height="22" fill="#ffffff"/><rect x="903" y="495" width="1" height="22" fill="#ffffff"/><rect x="913" y="495" width="1" height="22" fill="#ffffff"/><rect x="918" y="495" width="1" height="22" fill="#ffffff"/><rect x="922" y="495" width="1" height="22" fill="#ffffff"/><rect x="925" y="495" width="1" height="22" fill="#ffffff"/><rect x="933" y="503" width="1" height="14" fill="#ffffff"/><rect x="940" y="503" width="1" height="14" fill="#ffffff"/><rect x="946" y="503" width="1" height="14" fill="#ffffff"/><rect x="925" y="495" width="1" height="9" fill="#ffffff"/><rect x="926" y="495" width="17" height="2" fill="#28c8f0"/><rect x="955" y="495" width="1" height="8" fill="#ffffff"/><rect x="956" y="495" width="18" height="2" fill="#28c8f0"/><rect x="926" y="502" width="61" height="1" fill="#ffffff"/><ellipse cx="951" cy="506.5" rx="3.300" ry="2.800" fill="#2020e8" shape-rendering="auto"/><rect x="955" y="503" width="28" height="3" fill="#28c8f0"/><rect x="955" y="506" width="27" height="3" fill="#00ffff"/><rect x="946" y="509" width="30" height="3" fill="#00ffff"/><rect x="946" y="513" width="20" height="1" fill="#d06080"/><rect x="966" y="510" width="21" height="1" fill="#ffffff"/><rect x="966" y="510" width="1" height="7" fill="#ffffff"/><rect x="967" y="511" width="19" height="5" fill="#000"/><rect x="950" y="513" width="1" height="5" fill="#c03030"/><rect x="955" y="513" width="1" height="5" fill="#c03030"/><rect x="961" y="513" width="1" height="5" fill="#c03030"/><rect x="894" y="491" width="1" height="26" fill="#ffffff"/><rect x="235.5" y="520.5" width="11" height="11" fill="none" stroke="#ffffff"/><rect x="240" y="443" width="1" height="89" fill="#ffffff"/><rect x="235" y="525" width="90" height="1" fill="#ffffff"/><g shape-rendering="auto" fill="none" stroke="#fff" stroke-width="1"><path d="M237.500 453 L240.500 443 L243.500 453 M240.500 449 L238.500 453 M240.500 449 L242.500 453"/><path d="M314 522.500 L324 525.500 L314 528.500"/><path d="M237 421.500 L242.500 429 L248 421.500 M242.500 429 V436.500"/><path d="M333 519 L344 533 M344 519 L333 533"/></g><rect x="348" y="567" width="1" height="54" fill="#ffffff"/><rect x="301" y="613" width="95" height="1" fill="#ffffff"/><rect x="344.5" y="609.5" width="9" height="9" fill="none" stroke="#ffffff"/></svg>
<div class="a" style="left:203px;top:621px;width:885px;height:14px;background:#4b525c"></div>
<svg style="left:203px;top:621px" width="300" height="15" viewBox="203 621 300 15"><path d="M268 621 H314.500 L308 635 H274.500 Z" fill="#2c323b"/><g fill="#969ca6"><path d="M208 623 h2 v9.500 h-2 Z M215 623 v9.500 l-5 -4.750 Z M231 623 v9.500 l-5 -4.750 Z M240 623 v9.500 l5 -4.750 Z M256 623 v9.500 l5 -4.750 Z M261 623 h2 v9.500 h-2 Z"/></g><g stroke="#e8eaee" stroke-width="1.100" fill="none"><path d="M268 621 L274.500 635 M314.500 621 L308 635 M310.500 629 L313.500 635 M353 621 L359.500 635 M356.700 628.500 L353.500 635 M406.500 621 L400 635"/></g></svg>
<span class="t" style="left:279px;top:623px;color:#fff;font-weight:bold;font-size:12px">模型</span>
<span class="t" style="left:318px;top:623px;color:#e4e6ea;font-size:12px">布局1</span>
<span class="t" style="left:364px;top:623px;color:#e4e6ea;font-size:12px">布局2</span>
<div class="a" style="left:203px;top:635px;width:885px;height:1px;background:#fff"></div>
<div class="a" style="left:1088px;top:102px;width:3px;height:534px;background:#f6f8fb"></div>
<div class="a" style="left:0;top:636px;width:1365px;height:5px;background:linear-gradient(#fff 0,#fff 1px,#a9a9a9 1px,#a9a9a9 2px,#f0f0f0 2px)"></div>
<div class="a" style="left:1091px;top:102px;width:26px;height:534px;background:#fff"></div>
<div class="a" style="left:1094px;top:105px;width:20px;height:4px;border-top:2px solid #6fa0e2;border-bottom:1px solid #8db8ee"></div>
<svg style="left:1095px;top:116px" width="16" height="16" viewBox="0 0 16 16"><rect x="3" y="4" width="12" height="10" fill="#c9d8f3" stroke="#7f9fd8"/><path d="M3 10 H15 M9 10 V14" stroke="#7f9fd8"/><circle cx="4.5" cy="4.5" r="4" fill="#f2b92b"/><circle cx="4.5" cy="4.5" r="1.6" fill="none" stroke="#fff" stroke-width="0.9"/><path d="M16 11.5 V16 H11.5 Z" fill="#000"/></svg>
<svg style="left:1095px;top:138px" width="16" height="16" viewBox="0 0 16 16"><circle cx="10.5" cy="5.5" r="5" fill="#fff" stroke="#7f9fd8" stroke-width="1.1"/><text x="10.5" y="8.5" font-size="8" text-anchor="middle" fill="#4f79c4" font-family="Liberation Sans,sans-serif">1</text><path d="M7 9.5 L1.5 15 M1 11 V15.5 H5.5" fill="none" stroke="#5f7fa8" stroke-width="1.4"/><path d="M16 11.5 V16 H11.5 Z" fill="#000"/></svg>
<svg style="left:1095px;top:160px" width="16" height="16" viewBox="0 0 16 16"><path d="M3 1 V15 M0 12.5 H14" stroke="#4f79c4" stroke-width="1.2"/><path d="M3 12 C8 11 9 10 9.5 6.5 H14 V1.5" fill="none" stroke="#d9a03a" stroke-width="1.3"/><path d="M1.5 3 L3 0.5 L4.5 3" fill="none" stroke="#4f79c4"/><path d="M16 11.5 V16 H11.5 Z" fill="#000"/></svg>
<svg style="left:1095px;top:182px" width="16" height="16" viewBox="0 0 16 16"><path d="M1 12 C3 3 11 3 14 10" fill="none" stroke="#4f79c4" stroke-width="1.3"/><path d="M0 8.5 H15 M7.5 1 V15" stroke="#4f79c4" stroke-width="1.1"/><path d="M16 11.5 V16 H11.5 Z" fill="#000"/></svg>
<svg style="left:1095px;top:204px" width="16" height="16" viewBox="0 0 16 16"><path d="M1.5 1 V15 M14.5 1 V12" stroke="#4f79c4" stroke-width="1.1"/><path d="M2 4.5 H14" stroke="#4f79c4"/><path d="M2 3 H7 a3 3 0 0 1 0 6 H2 M6 9 C8 10 9 14 13 14" fill="none" stroke="#3a9a5a" stroke-width="1.4"/><path d="M16 11.5 V16 H11.5 Z" fill="#000"/></svg>
<svg style="left:1095px;top:226px" width="16" height="16" viewBox="0 0 16 16"><text x="5" y="5.800" font-size="7" font-weight="bold" text-anchor="middle" fill="#3f63b4" font-family="Liberation Sans,sans-serif" letter-spacing="-0.3">3.2</text><path d="M0.500 7.300 H10.500" fill="none" stroke="#4f74c4" stroke-width="1.200"/><path d="M1.200 8.300 L6.500 14 L15.200 1.200 M11.500 8 H1" fill="none" stroke="#5b82d0" stroke-width="1.300"/><path d="M16 11.5 V16 H11.5 Z" fill="#000"/></svg>
<svg style="left:1095px;top:248px" width="16" height="16" viewBox="0 0 16 16"><path d="M2.500 5.500 V2.500 H6 M4.500 1 L6.200 2.500 L4.500 4 M2.500 10.500 V13.500 H6 M4.500 12 L6.200 13.500 L4.500 15" fill="none" stroke="#6a7fb0" stroke-width="1"/><path d="M2.500 6.500 V10" stroke="#6a7fb0" stroke-dasharray="1.200 1"/><text x="10" y="10.300" font-size="6.500" font-weight="bold" text-anchor="middle" fill="#6a7fb0" font-family="Liberation Mono,monospace" letter-spacing="-0.4">A-A</text><path d="M16 11.5 V16 H11.5 Z" fill="#000"/></svg>
<svg style="left:1095px;top:270px" width="16" height="16" viewBox="0 0 16 16"><path d="M1 4.500 L4.500 1 L7.500 3.500 L5.500 5.500 L8.500 7.500 L5 11 L1.800 8 L4 6.300 Z" fill="#f4c42e"/><path d="M6.500 9.500 L9.500 6.500 L15 11 L12 14.500 Z" fill="#e9a52c" stroke="#c08a20" stroke-width="0.500"/><path d="M7.800 8.300 L13.500 12.800" stroke="#f8d878" stroke-width="0.900"/><path d="M12 14.500 L15 11 L15.800 15.500 Z" fill="#444"/><path d="M16 11.5 V16 H11.5 Z" fill="#000"/></svg>
<svg style="left:1095px;top:292px" width="16" height="16" viewBox="0 0 16 16"><text x="7.5" y="11" font-size="9.5" text-anchor="middle" fill="#3a9a3a" font-family="Liberation Sans,sans-serif" letter-spacing="-0.5">Text</text><path d="M16 11.5 V16 H11.5 Z" fill="#000"/></svg>
<svg style="left:1095px;top:314px" width="16" height="16" viewBox="0 0 16 16"><path d="M1 2.5 H6 L7.5 4 H14.5 V14 H1 Z" fill="#c9d8f3" stroke="#4f79c4"/><path d="M3 9 H13 M5 6.5 H11 V11.5 H5 Z M8 6.5 V11.5" fill="none" stroke="#4f79c4" stroke-width="1.1"/><path d="M16 11.5 V16 H11.5 Z" fill="#000"/></svg>
<svg style="left:1095px;top:336px" width="16" height="16" viewBox="0 0 16 16"><path d="M1 6 H6 V10 H1 Z" fill="#c9d8f3" stroke="#4f79c4"/><ellipse cx="9" cy="8" rx="4" ry="6.5" fill="#c9d8f3" stroke="#7f9fd8"/><path d="M6 6.5 H10 V9.5 H6" fill="#fff" stroke="#4f79c4"/><path d="M16 11.5 V16 H11.5 Z" fill="#000"/></svg>
<svg style="left:1095px;top:358px" width="16" height="16" viewBox="0 0 16 16"><path d="M2.5 5 H13.5 L12.5 15 H3.5 Z" fill="#c9d8f3" stroke="#4f79c4"/><path d="M1 3.5 H15 M5 3 V1.5 H11 V3" fill="none" stroke="#4f79c4" stroke-width="1.5"/><path d="M6 5.5 V14.5 M10 5.5 V14.5 M3 10 H13" stroke="#4f79c4"/><path d="M16 11.5 V16 H11.5 Z" fill="#000"/></svg>
<svg style="left:1095px;top:380px" width="16" height="16" viewBox="0 0 16 16"><rect x="1" y="2" width="11" height="9" fill="#c9d8f3" stroke="#4f79c4"/><rect x="4" y="5.5" width="11" height="8.5" fill="#e4ecfa" stroke="#4f79c4"/><rect x="6" y="8" width="4" height="3" fill="#4f79c4"/><path d="M11 8.5 H13.5 M11 10.5 H13.5" stroke="#4f79c4"/><path d="M16 11.5 V16 H11.5 Z" fill="#000"/></svg>
<svg style="left:1095px;top:402px" width="16" height="16" viewBox="0 0 16 16"><path d="M2.5 1.5 H13.5 V14.5 H2.5 Z" fill="#c9d8f3" stroke="#4f79c4"/><path d="M4.5 1.5 V14.5" stroke="#4f79c4" stroke-width="1.5"/><text x="9.5" y="12" font-size="10" text-anchor="middle" fill="#4f79c4" font-family="Liberation Sans,sans-serif">?</text><path d="M16 11.5 V16 H11.5 Z" fill="#000"/></svg>
<div class="a" style="left:1094px;top:431px;width:20px;height:4px;border-top:2px solid #6fa0e2;border-bottom:1px solid #8db8ee"></div>
<svg style="left:1095px;top:441.5px" width="16" height="16" viewBox="0 0 16 16"><path d="M1.5 10.5 L10 2 L14.5 6.5 L6 15 H3.5 Z" fill="#fff" stroke="#3d4450" stroke-width="1.3"/><path d="M7 7.5 L11 11.5" stroke="#7a86b8" stroke-width="2.5"/></svg>
<svg style="left:1095px;top:463.5px" width="16" height="16" viewBox="0 0 16 16"><rect x="1.5" y="1.5" width="5" height="5" fill="#fff" stroke="#3d4450" stroke-width="1.2"/><path d="M9 2 C12 2 13.5 4 13 8 M11 6.5 L13 8.8 L15 6.5" fill="none" stroke="#2f7fc4" stroke-width="1.5"/><path d="M8 10.5 V14.5 H14.5 V10.5" fill="none" stroke="#8a3a7a" stroke-width="1.2" stroke-dasharray="2 1"/></svg>
<svg style="left:1095px;top:485.5px" width="16" height="16" viewBox="0 0 16 16"><path d="M6.5 3 V14 H1 Z" fill="#fff" stroke="#3d4450" stroke-width="1.1"/><path d="M9.5 3 V14 H15 Z" fill="#8a3a7a"/><path d="M8 0.5 V15.5" stroke="#3d4450"/></svg>
<svg style="left:1095px;top:507.5px" width="16" height="16" viewBox="0 0 16 16"><path d="M2 14.5 H14.5 V12 C14.5 9 12 8.5 10.5 8.5 C11.5 4 6 2 5 6.5 C5 9 4 9.5 2 10.5 Z" fill="none" stroke="#8a3a7a" stroke-width="1.3"/><path d="M4 12.5 H12.5 C12.5 11 11 10.5 8.5 10.5 C9.5 6 7 5.5 7 8 C7 10.5 5.5 11.5 4 12.5 Z" fill="none" stroke="#8a3a7a" stroke-width="0.9"/></svg>
<svg style="left:1095px;top:529.5px" width="16" height="16" viewBox="0 0 16 16"><rect x="1" y="1" width="6.3" height="6.3" fill="#8a3a7a"/><rect x="8.7" y="1" width="6.3" height="6.3" fill="#9a7a96"/><rect x="1" y="8.7" width="6.3" height="6.3" fill="#9a7a96"/><rect x="8.7" y="8.7" width="6.3" height="6.3" fill="#9a7a96"/></svg>
<svg style="left:1095px;top:551.5px" width="16" height="16" viewBox="0 0 16 16"><path d="M8 1 V15 M1 8 H15 M5.5 3.5 L8 1 L10.5 3.5 M5.5 12.5 L8 15 L10.5 12.5 M3.5 5.5 L1 8 L3.5 10.5 M12.5 5.5 L15 8 L12.5 10.5" fill="none" stroke="#3d4450" stroke-width="1.3"/></svg>
<svg style="left:1095px;top:573.5px" width="16" height="16" viewBox="0 0 16 16"><path d="M8 3 A6 6 0 1 0 14 9" fill="none" stroke="#3d4450" stroke-width="1.4"/><path d="M7 0 L11 3 L7 6 Z" fill="#3d4450"/></svg>
<svg style="left:1095px;top:595.5px" width="16" height="16" viewBox="0 0 16 16"><path d="M14.5 6 V1.5 H1.5 V14.5 H6" fill="none" stroke="#3d4450" stroke-width="1.3"/><rect x="8.5" y="8.5" width="6" height="6" fill="none" stroke="#3d4450" stroke-dasharray="1.5 1"/><path d="M10 13 L13 10 M10.5 10 H13 V12.5" fill="none" stroke="#3d4450"/></svg>
<svg style="left:1095px;top:617.5px" width="16" height="16" viewBox="0 0 16 16"><rect x="1.5" y="2.5" width="13" height="12" fill="#fff" stroke="#3d4450" stroke-width="1.2" stroke-dasharray="3 1"/><path d="M8 12.5 V6 M5.5 8.5 L8 5.5 L10.5 8.5" fill="none" stroke="#8a3a7a" stroke-width="1.8"/></svg>
<div class="a" style="left:1116px;top:102px;width:4px;height:534px;background:linear-gradient(90deg,#c3c9d6,#dfe3ec)"></div>
<div class="a" style="left:1120px;top:102px;width:245px;height:534px;background:#f0f0f0"></div>
<div class="a" style="left:1126px;top:110px;width:219px;height:1px;background:#8a8a8a"></div>
<div class="a" style="left:1126px;top:116px;width:219px;height:1px;background:#8a8a8a"></div>
<svg style="left:1351px;top:109px" width="8" height="8" viewBox="0 0 8 8"><path d="M0.5 1 L6.5 7 M6.5 1 L0.5 7" stroke="#222" stroke-width="1.800"/></svg>
<div class="a" style="left:1128px;top:127px;width:150px;height:23px;background:#fff;border:1px solid #a9aeb5"><span class="t" style="left:3px;top:4px;font-size:12px">无选择</span><div class="a" style="right:0;top:0;width:17px;height:21px;border-left:1px solid #b5b9bf"></div></div>
<div class="a" style="left:1283px;top:125px;width:25px;height:25px;background:#f6f6f6;border:1px solid #55585c"></div>
<svg style="left:1287px;top:130px" width="16" height="16" viewBox="0 0 16 16"><rect x="3" y="3" width="9" height="9" fill="#fff" stroke="#444"/></svg>
<div class="a" style="left:1307px;top:125px;width:25px;height:25px;background:#f6f6f6;border:1px solid #55585c"></div>
<svg style="left:1311px;top:130px" width="16" height="16" viewBox="0 0 16 16"><rect x="5.5" y="1.5" width="8" height="8" fill="#dbe7f6" stroke="#4f79c4"/><path d="M6 6 A4.5 4.5 0 1 0 10 12" fill="none" stroke="#666" stroke-width="1.2"/><path d="M10 8 V15 L11.8 13.3 L13 16 L14 15.5 L12.8 13 H15 Z" fill="#fff" stroke="#333" stroke-width="0.8"/></svg>
<div class="a" style="left:1331px;top:125px;width:25px;height:25px;background:#f6f6f6;border:1px solid #55585c"></div>
<svg style="left:1335px;top:130px" width="16" height="16" viewBox="0 0 16 16"><path d="M2 1 V12 L5 9.5 L7 13.5 L8.5 12.8 L6.7 9 H10.5 Z" fill="#fff" stroke="#333" stroke-width="0.9"/><path d="M12 3 L8.5 9 H11 L9.5 14 L15 7 H12 L14 3 Z" fill="#f0a830"/></svg>
<div class="sec" style="top:161px"><span class="t">一般</span><svg style="left:202px;top:4px" width="9" height="10" viewBox="0 0 9 10"><path d="M0.500 4.500 L4.500 0.800 L8.500 4.500 M0.500 9 L4.500 5.300 L8.500 9" fill="none" stroke="#fff" stroke-width="1.300"/></svg></div>
<div class="row" style="top:178px"><span class="l">颜色</span><div class="v w"><i class="sw"></i><span style="left:20px">ByLayer</span></div></div>
<div class="row" style="top:195px"><span class="l">层</span><div class="v w"><span>0</span></div></div>
<div class="row" style="top:212px"><span class="l">线型</span><div class="v w"><i class="ln"></i><span style="left:57px">ByLayer</span></div></div>
<div class="row" style="top:229px"><span class="l">线型比例</span><div class="v w"><span>1</span></div></div>
<div class="row" style="top:246px"><span class="l">线宽</span><div class="v w"><i class="ln"></i><span style="left:58px">ByLayer</span></div></div>
<div class="row" style="top:263px"><span class="l">厚度</span><div class="v w"><span>0</span></div></div>
<div class="sec" style="top:288px"><span class="t">打印样式</span><svg style="left:202px;top:4px" width="9" height="10" viewBox="0 0 9 10"><path d="M0.500 4.500 L4.500 0.800 L8.500 4.500 M0.500 9 L4.500 5.300 L8.500 9" fill="none" stroke="#fff" stroke-width="1.300"/></svg></div>
<div class="row" style="top:305px"><span class="l">打印样式</span><div class="v"><span>ByColor</span></div></div>
<div class="row" style="top:322px"><span class="l">打印样式表</span><div class="v w"><span style="font-size:12px;top:2px;letter-spacing:0">无</span></div></div>
<div class="row" style="top:339px"><span class="l">打印表附着到</span><div class="v"><span style="font-size:12px;top:2px;letter-spacing:0">模型空间</span></div></div>
<div class="row" style="top:356px"><span class="l">打印表类型</span><div class="v"><span style="font-size:12px;top:2px;letter-spacing:0">不可用</span></div></div>
<div class="sec" style="top:381px"><span class="t">视图</span><svg style="left:202px;top:4px" width="9" height="10" viewBox="0 0 9 10"><path d="M0.500 4.500 L4.500 0.800 L8.500 4.500 M0.500 9 L4.500 5.300 L8.500 9" fill="none" stroke="#fff" stroke-width="1.300"/></svg></div>
<div class="row" style="top:398px"><span class="l">圆心<b class="en">X</b>坐标</span><div class="v"><span>789.4538</span></div></div>
<div class="row" style="top:415px"><span class="l">圆心<b class="en">Y</b>坐标</span><div class="v"><span>294.5989</span></div></div>
<div class="row" style="top:432px"><span class="l">圆心<b class="en">Z</b>坐标</span><div class="v"><span>0</span></div></div>
<div class="row" style="top:449px"><span class="l">高度</span><div class="v"><span>959.705</span></div></div>
<div class="row" style="top:466px"><span class="l">宽度</span><div class="v"><span>1724.348</span></div></div>
<div class="sec" style="top:491px"><span class="t">其他</span><svg style="left:202px;top:4px" width="9" height="10" viewBox="0 0 9 10"><path d="M0.500 4.500 L4.500 0.800 L8.500 4.500 M0.500 9 L4.500 5.300 L8.500 9" fill="none" stroke="#fff" stroke-width="1.300"/></svg></div>
<div class="row" style="top:508px"><span class="l">打开<b class="en"> </b><b class="en">UCS </b>图标</span><div class="v w"><span style="font-size:12px;top:2px;letter-spacing:0">是</span></div></div>
<div class="row" style="top:525px"><span class="l">在原点显示<b class="en"> </b>...</span><div class="v w"><span style="font-size:12px;top:2px;letter-spacing:0">是</span></div></div>
<div class="row" style="top:542px"><span class="l">显示<b class="en">UCS</b></span><div class="v w"><span style="font-size:12px;top:2px;letter-spacing:0">是</span></div></div>
<div class="row" style="top:559px"><span class="l"><b class="en">UCS </b>名称</span><div class="v"><span></span></div></div>
<div class="a" style="left:1131px;top:597px;width:217px;height:33px;border:1px solid #a8abb0;background:#f0f0f0"></div>
<div class="a" style="left:1168px;top:598px;width:40px;height:19px;background:#3aa7dc"></div>
<div class="a" style="left:1208px;top:598px;width:40px;height:19px;background:#72bb2c"></div>
<div class="a" style="left:1168px;top:617px;width:80px;height:19px;background:#8cc850"></div>
<div class="a" style="left:1208px;top:613px;width:40px;height:4px;background:#8cc850"></div>
<div class="a" style="left:1248px;top:598px;width:75px;height:38px;background:#fa9826"></div>
<span class="t" style="left:1176px;top:604px;color:#fdf8d8;font-size:12.5px;color:#e4f4fb">CPU</span>
<span class="t" style="left:1216px;top:603px;color:#fdf8d8;font-size:12.5px;font-size:12px">内存</span>
<span class="t" style="left:1175px;top:621px;color:#fdf8d8;font-size:12.5px;color:#eef8dc">51%</span>
<span class="t" style="left:1215px;top:621px;color:#fdf8d8;font-size:12.5px;color:#eef8dc">55%</span>
<span class="t" style="left:1288px;top:604px;color:#fdf8d8;font-size:12.5px">0 K/S</span>
<span class="t" style="left:1274px;top:621px;color:#fdf8d8;font-size:12.5px">284 K/S</span>
<svg style="left:1249.500px;top:604px" width="12" height="30" viewBox="0 0 12 30"><path d="M6 0 L11 5.500 H7.500 V10 H4.500 V5.500 H1 Z M6 28 L11 22.500 H7.500 V18 H4.500 V22.500 H1 Z" fill="#fff"/></svg>
<span class="t" id="wm" style="left:1215px;top:602.500px;font-family:'Liberation Serif',serif;font-size:19px;letter-spacing:0.530px;color:rgba(255,255,255,0.62)">www.ttcad.com</span>
<div class="a" style="left:1206px;top:117px;width:104px;height:25px;border-radius:3px;background:rgba(178,219,248,0.97);border:1px solid #7fb8e6"></div>
<div class="a" style="left:1206px;top:117px;width:30px;height:25px;border-radius:3px 0 0 3px;background:#2f92e6"></div>
<div class="a" style="left:1236px;top:118px;width:14px;height:23px;background:rgba(125,190,240,0.75)"></div>
<svg style="left:1211px;top:120px" width="22" height="19" viewBox="0 0 22 19"><circle cx="6" cy="11.800" r="2.900" fill="none" stroke="#fff" stroke-width="2.500"/><circle cx="11.400" cy="5.900" r="3.400" fill="none" stroke="#fff" stroke-width="2.500"/><path d="M15 6.300 C17.800 7 19.600 9.200 19.500 12.300" fill="none" stroke="#fff" stroke-width="2.300" stroke-linecap="round"/><circle cx="19.500" cy="15.800" r="1.300" fill="#fff"/></svg>
<svg style="left:1240px;top:125px" width="7" height="10" viewBox="0 0 7 10"><path d="M2.500 0 H4.500 V5 H7 L3.500 9.500 L0 5 H2.500 Z" fill="#2f80d4"/></svg>
<span class="t" style="left:1250px;top:124px;font-size:12px;color:#5f8cba;font-family:'DejaVu Sans','Liberation Sans',sans-serif;letter-spacing:-0.3px">281 KB/s</span>
</body>
</html>
